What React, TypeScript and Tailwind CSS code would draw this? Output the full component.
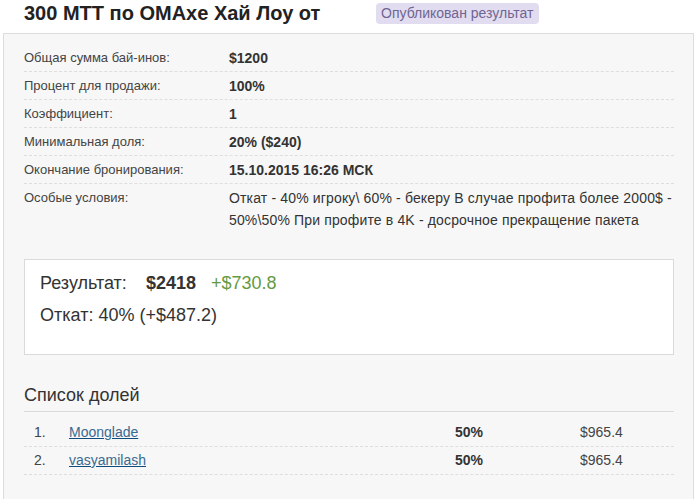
const rows: { label: string; value: string }[] = [
  { label: 'Общая сумма бай-инов:', value: '$1200' },
  { label: 'Процент для продажи:', value: '100%' },
  { label: 'Коэффициент:', value: '1' },
  { label: 'Минимальная доля:', value: '20% ($240)' },
  { label: 'Окончание бронирования:', value: '15.10.2015 16:26 МСК' },
]

const shares = [
  { n: 1, name: 'Moonglade', pct: '50%', sum: '$965.4' },
  { n: 2, name: 'vasyamilash', pct: '50%', sum: '$965.4' },
]

export default function App() {
  return (
    <div className="min-h-[499px] bg-white text-[#333] font-['Liberation_Sans',Arial,sans-serif] flex flex-col">
      <div className="h-[26px] flex items-center">
        <h1 className="w-[376px] pl-[24px] text-[20px] font-bold text-[#222] leading-[26px]">
          300 MTT по OMAxe Хай Лоу от
        </h1>
        <span className="h-[21px] px-[5px] rounded-[4px] bg-[#e2dcf0] text-[#6f6592] text-[14px] leading-[21px]">
          Опубликован результат
        </span>
      </div>

      <div className="mt-[7px] ml-[3px] w-[691px] flex-1 border border-[#dcdcdc] border-b-0 bg-[#f7f7f7] pl-[20px] pr-[19px] pt-[10px]">
        <div>
          {rows.map((r) => (
            <div key={r.label} className="flex h-[28px] items-center border-b border-dashed border-[#dedede] pt-[1px]">
              <div className="w-[205px] text-[13px] text-[#444]">{r.label}</div>
              <div className="text-[14px] font-bold text-[#333]">{r.value}</div>
            </div>
          ))}
          <div className="flex pt-[3px] leading-[22px]">
            <div className="w-[205px] shrink-0 text-[13px] text-[#444]">Особые условия:</div>
            <div className="text-[14px] tracking-[0.15px] text-[#333]">
              Откат - 40% игроку\ 60% - бекеру В случае профита более 2000$ - 50%\50% При профите в 4K - досрочное прекращение пакета
            </div>
          </div>
        </div>

        <div className="mt-[28px] h-[96px] border border-[#dadada] bg-white px-[15px] pt-[12px] text-[18px] text-[#333]">
          <div className="flex leading-[22px]">
            <span>Результат:</span>
            <span className="ml-[19px] font-bold">$2418</span>
            <span className="ml-[15px] text-[#659a3f]">+$730.8</span>
          </div>
          <div className="mt-[10px] leading-[22px]">Откат: 40% (+$487.2)</div>
        </div>

        <h2 className="mt-[28px] pb-[4px] border-b border-[#dadada] text-[18px] leading-[24px] text-[#333]">
          Список долей
        </h2>
        <div className="mt-[7px] text-[14px]">
          {shares.map((s) => (
            <div key={s.n} className="flex h-[28px] items-center border-b border-dashed border-[#dedede]">
              <div className="w-[45px] pl-[10px] text-[#444]">{s.n}.</div>
              <div className="w-[386px]">
                <a href="#" className="text-[#3a6a92] underline decoration-[#0f4c7e]">{s.name}</a>
              </div>
              <div className="w-[125px] font-bold">{s.pct}</div>
              <div className="text-[#444]">{s.sum}</div>
            </div>
          ))}
        </div>
      </div>
    </div>
  )
}
